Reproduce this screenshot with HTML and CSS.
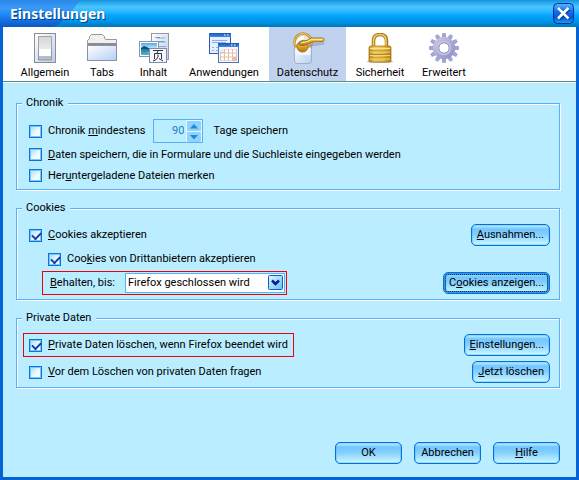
FILE: index.html
```html
<!DOCTYPE html>
<html lang="de">
<head>
<meta charset="utf-8">
<title>Einstellungen</title>
<link rel="stylesheet" href="styles.css">
</head>
<body>
<div class="window">
  <header class="titlebar">
    <svg class="titlebar-accent" viewBox="0 0 80 27" preserveAspectRatio="none" aria-hidden="true">
      <defs>
        <linearGradient id="accent" x1="0" y1="0" x2="0" y2="1">
          <stop offset="0" stop-color="#2a86e8"/><stop offset=".3" stop-color="#3a9cf6"/>
          <stop offset=".55" stop-color="#1d86fb"/><stop offset="1" stop-color="#0a58c4"/>
        </linearGradient>
      </defs>
      <path d="M0 0H80Q73 10 68 16Q60 25 52 27H0Z" fill="url(#accent)"/>
    </svg>
    <h1>Einstellungen</h1>
    <button class="close" type="button" aria-label="Schließen">
      <svg viewBox="0 0 21 21" width="21" height="21">
        <defs>
          <linearGradient id="closeFill" x1="0" y1="0" x2="0" y2="1">
            <stop offset="0" stop-color="#55bcff"/><stop offset=".35" stop-color="#1974ee"/>
            <stop offset=".7" stop-color="#0754d4"/><stop offset="1" stop-color="#12a5fa"/>
          </linearGradient>
        </defs>
        <rect x=".5" y=".5" width="20" height="20" rx="4" fill="url(#closeFill)" stroke="#0430a0"/>
        <path d="M6 6L16 16M16 6L6 16" stroke="#053a9c" stroke-width="3.400"/>
        <path d="M5 5L15.500 15.500M15.500 5L5 15.500" stroke="#fff" stroke-width="2.600"/>
      </svg>
    </button>
  </header>

  <nav class="toolbar">
    <button class="tool" type="button">
      <svg viewBox="0 0 30 30" width="30" height="30">
        <defs><linearGradient id="plate" x1="0" y1="0" x2="1" y2="1"><stop offset="0" stop-color="#fff"/><stop offset="1" stop-color="#b9cdf2"/></linearGradient>
        <linearGradient id="rocker" x1="0" y1="0" x2="0" y2="1"><stop offset="0" stop-color="#d5d5d5"/><stop offset="1" stop-color="#f1f1f1"/></linearGradient></defs>
        <rect x="4.500" y=".5" width="21" height="29" fill="url(#plate)" stroke="#8d8d8d"/>
        <rect x="8" y="3" width="14" height="24" fill="#b5bccb"/>
        <rect x="8.500" y="3.500" width="13" height="17" fill="url(#rocker)" stroke="#a3a3a3"/>
        <rect x="9" y="16" width="12" height="7" fill="#fff"/>
        <path d="M8.500 16V27H21.500V16" fill="none" stroke="#8f96a3"/>
      </svg>
      <span>Allgemein</span>
    </button>
    <button class="tool" type="button">
      <svg viewBox="0 0 30 30" width="30" height="30">
        <defs><linearGradient id="tabBody" x1="0" y1="0" x2="1" y2="1"><stop offset="0" stop-color="#fff"/><stop offset="1" stop-color="#b3cef6"/></linearGradient></defs>
        <path d="M.5 27.500V7.500L2.500 5.500V3.500L4.500 1.500H15.500L17.500 3.500V5.500L19 6.500H29.500V27.500Z" fill="#f0f0f0" stroke="#999"/>
        <path d="M1 11H29" stroke="#8d8d8d" stroke-width="2"/>
        <rect x=".5" y="12.500" width="29" height="15" fill="url(#tabBody)" stroke="#8a93a5"/>
      </svg>
      <span>Tabs</span>
    </button>
    <button class="tool" type="button">
      <svg viewBox="0 0 30 30" width="30" height="30">
        <defs><linearGradient id="sea" x1="0" y1="0" x2="0" y2="1"><stop offset="0" stop-color="#55a8ef"/><stop offset=".5" stop-color="#d4f0fa"/><stop offset=".52" stop-color="#187bac"/><stop offset="1" stop-color="#54b9cd"/></linearGradient></defs>
        <rect x="12.500" y=".5" width="17" height="26" fill="url(#plate)" stroke="#999"/>
        <path d="M16 4.500H21M16 8.500H25M16 13.500H27" stroke="#8ca1c4"/><path d="M18 5H26M19 9H27" stroke="#4d8ca9" opacity=".6"/>
        <rect x=".5" y="8.500" width="19" height="15" fill="#fff" stroke="#8994a5"/>
        <rect x="2" y="10" width="16" height="12" fill="url(#sea)"/>
        <path d="M2 15L5 13L8 14L11 16H2Z" fill="#164d7c"/><path d="M8 20L17 17V21Z" fill="#a7e6e4"/>
        <rect x="10.500" y="15.500" width="17" height="14" fill="#f4f7ff" stroke="#7f8ba3"/>
        <path d="M14 17.500H24M19 18L18 20M15.500 20.500H22.500V26M15.500 20.500V26M19 21.500V24Q18 27 14 28M20 25.500L24 28" fill="none" stroke="#333"/>
      </svg>
      <span>Inhalt</span>
    </button>
    <button class="tool" type="button">
      <svg viewBox="0 0 30 30" width="30" height="30">
        <defs><linearGradient id="caption" x1="0" y1="0" x2="0" y2="1"><stop offset="0" stop-color="#1855b5"/><stop offset="1" stop-color="#3f8be4"/></linearGradient></defs>
        <rect x=".5" y=".5" width="21" height="20" fill="#e6efff" stroke="#2b5dad"/>
        <rect x="0" y="0" width="22" height="4" fill="url(#caption)"/>
        <path d="M15 2H16.500M18 2H19.500" stroke="#fff"/>
        <path d="M3 7.500H18M3 9.500H17M3 14.500H5M7 14.500H10M3 17.500H5M7 17.500H10" stroke="#8daee0"/>
        <rect x="9.500" y="10.500" width="20" height="19" fill="#f3f6ff" stroke="#4a77b9"/>
        <rect x="9" y="10" width="21" height="4" fill="url(#caption)"/>
        <path d="M22 12H23.500M25 12H26.500" stroke="#fff"/>
        <rect x="11" y="16" width="17" height="12" fill="#e7bda9"/>
        <path d="M11 16H15V19H11Z" fill="#e8edfa"/>
        <g fill="#fff"><path d="M16 16.500h3v3h-3zM20 16.500h3v3h-3zM24 16.500h3v3h-3zM12 20.500h3v3h-3zM16 20.500h3v3h-3zM20 20.500h3v3h-3zM24 20.500h3v3h-3zM12 24.500h3v3h-3zM16 24.500h3v3h-3zM20 24.500h3v3h-3z"/></g>
      </svg>
      <span>Anwendungen</span>
    </button>
    <button class="tool tool-active" type="button" aria-current="page">
      <svg viewBox="0 0 30 30" width="30" height="30" overflow="visible">
        <defs><linearGradient id="gold" x1="0" y1="0" x2="0" y2="1"><stop offset="0" stop-color="#f9df80"/><stop offset=".5" stop-color="#dca92f"/><stop offset="1" stop-color="#a97310"/></linearGradient>
        <linearGradient id="tag" x1="0" y1="0" x2="1" y2="1"><stop offset="0" stop-color="#fff"/><stop offset="1" stop-color="#b7cff5"/></linearGradient></defs>
        <path d="M1.500 12Q1 18 1.500 28Q2 30.500 4 30.500H16Q18.500 30.500 18.500 28V13Z" fill="url(#tag)" stroke="#a4afc4"/>
        <circle cx="10" cy="9" r="8.500" fill="#e4e4e2" stroke="#b88a22" stroke-width="2.600"/>
        <circle cx="10" cy="9" r="8.500" fill="none" stroke="#f2d166"/>
        <path d="M2.500 14Q8 19 17.500 14V22H2.500Z" fill="#f0f5ff"/>
        <path d="M4 11Q5 5 11 4.500" fill="none" stroke="#fff" stroke-width="3"/>
        <path d="M16 11L31 9V11.500L15 14Z" fill="#8994b4" opacity=".55"/>
        <circle cx="9.500" cy="13.500" r="5.500" fill="url(#gold)" stroke="#a5731a"/>
        <path d="M5.500 10Q8 7 14 7.500L18 5L29.500 5Q31 5 31 6.500V7.500Q31 8.500 29 8.500L19 9Q15 12 10 12.500Q5 12.500 5.500 10Z" fill="url(#gold)" stroke="#a4711a"/>
        <path d="M8 10L14 8.500L18.500 6.500H29" fill="none" stroke="#ffeb9c"/>
      </svg>
      <span>Datenschutz</span>
    </button>
    <button class="tool" type="button">
      <svg viewBox="0 0 30 30" width="30" height="30">
        <defs><linearGradient id="lock" x1="0" y1="0" x2="1" y2="0"><stop offset="0" stop-color="#b68118"/><stop offset=".25" stop-color="#efc957"/><stop offset=".65" stop-color="#e6b73d"/><stop offset="1" stop-color="#ae7711"/></linearGradient></defs>
        <ellipse cx="15" cy="28.500" rx="13" ry="1.500" fill="#aaa"/>
        <path d="M8.500 14V8Q8.500 1.500 15 1.500Q21.500 1.500 21.500 8V14" fill="none" stroke="#a87518" stroke-width="3.500"/>
        <path d="M8.500 14V8Q8.500 1.500 15 1.500Q21 1.500 21 8V14" fill="none" stroke="#f0d06e" stroke-width="1.500"/>
        <rect x="4" y="13" width="22" height="16" rx="1.500" fill="url(#lock)" stroke="#ad781b" stroke-width=".8"/>
        <path d="M5 15.500H25" stroke="#f9e391" stroke-width="1.500"/>
        <path d="M5 18H25M5 21.500H25M5 25H25" stroke="#b78623"/><path d="M5 19H25M5 22.500H25M5 26H25" stroke="#f4d675"/>
      </svg>
      <span>Sicherheit</span>
    </button>
    <button class="tool" type="button">
      <svg viewBox="-15 -15 30 30" width="30" height="30">
        <defs><linearGradient id="gearFill" x1="0" y1="0" x2="1" y2="1"><stop offset="0" stop-color="#c6c6e6"/><stop offset="1" stop-color="#9292c8"/></linearGradient>
        <path id="tooth" d="M-2.400 -10L-1.700 -15H1.700L2.400 -10Z"/></defs>
        <g fill="#a4a4d3">
          <use href="#tooth"/><use href="#tooth" transform="rotate(30)"/><use href="#tooth" transform="rotate(60)"/><use href="#tooth" transform="rotate(90)"/><use href="#tooth" transform="rotate(120)"/><use href="#tooth" transform="rotate(150)"/><use href="#tooth" transform="rotate(180)"/><use href="#tooth" transform="rotate(210)"/><use href="#tooth" transform="rotate(240)"/><use href="#tooth" transform="rotate(270)"/><use href="#tooth" transform="rotate(300)"/><use href="#tooth" transform="rotate(330)"/>
        </g>
        <circle r="8.200" fill="none" stroke="url(#gearFill)" stroke-width="5.500"/>
        <circle r="6.500" fill="none" stroke="#c4c4e4" stroke-width="1.500"/>
        <circle r="5.200" fill="#fff" stroke="#8d8dbd"/>
      </svg>
      <span>Erweitert</span>
    </button>
  </nav>

  <main class="pane">
    <fieldset>
      <legend>Chronik</legend>
      <div class="row row-tall">
        <input type="checkbox" id="history"><label for="history">Chronik <u>m</u>indestens</label>
        <span class="spinner">
          <input type="text" id="days" value="90" aria-label="Tage" disabled>
          <span class="steps">
            <button type="button" aria-label="Mehr" disabled><svg viewBox="0 0 14 10" width="14" height="10"><path d="M3 7.500H11L7 3Z"/></svg></button>
            <button type="button" aria-label="Weniger" disabled><svg viewBox="0 0 14 10" width="14" height="10"><path d="M3 3H11L7 7.500Z"/></svg></button>
          </span>
        </span>
        <label for="days">Tage speichern</label>
      </div>
      <div class="row row-short">
        <input type="checkbox" id="forms"><label for="forms"><u>D</u>aten speichern, die in Formulare und die Suchleiste eingegeben werden</label>
      </div>
      <div class="row row-short">
        <input type="checkbox" id="downloads"><label for="downloads">Her<u>u</u>ntergeladene Dateien merken</label>
      </div>
    </fieldset>

    <fieldset class="cookies">
      <legend>Cookies</legend>
      <div class="row">
        <input type="checkbox" id="cookies" checked><label for="cookies"><u>C</u>ookies akzeptieren</label>
        <button class="button push" type="button"><u>A</u>usnahmen...</button>
      </div>
      <div class="row nested">
        <input type="checkbox" id="third" checked><label for="third">Coo<u>k</u>ies von Drittanbietern akzeptieren</label>
      </div>
      <div class="row nested">
        <div class="marked keep">
          <label for="keep"><u>B</u>ehalten, bis:</label>
          <span class="dropdown">
            <select id="keep"><option>Firefox geschlossen wird</option></select>
            <svg viewBox="0 0 15 15" width="15" height="15" aria-hidden="true">
              <defs><linearGradient id="arrowFill" x1="0" y1="0" x2="1" y2="1"><stop offset="0" stop-color="#e6f8ff"/><stop offset="1" stop-color="#66bdf6"/></linearGradient></defs>
              <rect x=".5" y=".5" width="14" height="14" rx="1" fill="url(#arrowFill)" stroke="#0862cb"/>
              <path d="M4 5.500L7.500 9L11 5.500" fill="none" stroke="#001b94" stroke-width="2.500"/>
            </svg>
          </span>
        </div>
        <button class="button push default" type="button">C<u>o</u>okies anzeigen...</button>
      </div>
    </fieldset>

    <fieldset class="private">
      <legend>Private Daten</legend>
      <div class="row">
        <div class="marked clear">
          <input type="checkbox" id="clear" checked><label for="clear"><u>P</u>rivate Daten löschen, wenn Firefox beendet wird</label>
        </div>
        <button class="button push" type="button"><u>E</u>instellungen...</button>
      </div>
      <div class="row">
        <input type="checkbox" id="ask"><label for="ask"><u>V</u>or dem Löschen von privaten Daten fragen</label>
        <button class="button push" type="button"><u>J</u>etzt löschen</button>
      </div>
    </fieldset>

    <footer class="actions">
      <button class="button" type="button">OK</button>
      <button class="button" type="button">Abbrechen</button>
      <button class="button" type="button"><u>H</u>ilfe</button>
    </footer>
  </main>
</div>
</body>
</html>
```
FILE: styles.css
```css
:root {
  --sky: #b9edff;
  --line: #59b0fa;
  --edge: #0070dc;
  --disabled: #2080c0;
}

* {
  box-sizing: border-box;
}

body {
  margin: 0;
  color: #000;
  font: 11px/14px Roboto, "Noto Sans", sans-serif;
}

button,
input,
select {
  margin: 0;
  padding: 0;
  color: inherit;
  font: inherit;
}

svg {
  display: block;
}

.window {
  display: flex;
  flex-direction: column;
  min-height: 100vh;
  border: solid #0563d8;
  border-width: 0 3px 3px;
  background: var(--sky);
}

/* Title bar */
.titlebar {
  position: relative;
  display: flex;
  align-items: center;
  justify-content: space-between;
  height: 27px;
  margin: 0 -3px;
  padding: 0 5px 0 10px;
  background: linear-gradient(#1593e0, #4ac5ff 25%, #31baff 40%, #00a6ff 58%, #0094e8 78%, #0078bd);
}

.titlebar-accent {
  position: absolute;
  top: 0;
  left: 0;
  width: 80px;
  height: 27px;
}

h1 {
  position: relative;
  margin: 0;
  color: #fff;
  font: bold 14px/28px "Noto Sans", sans-serif;
  text-shadow: 1px 1px 0 #073a80;
}

.close {
  border: 0;
  background: none;
}

/* Category toolbar */
.toolbar {
  display: grid;
  grid-template-columns: 62px 52px 51px 90px 77px 68px 60px;
  height: 55px;
  padding-left: 11px;
  border-bottom: 1px solid #5a8c8c;
  background: #fff;
}

.tool {
  display: flex;
  flex-direction: column;
  align-items: center;
  gap: 3px;
  padding-top: 6px;
  border: 0;
  background: none;
  white-space: nowrap;
}

.tool-active {
  background: #c1d2ee;
}

/* Settings pane */
.pane {
  display: flex;
  flex: 1;
  flex-direction: column;
  gap: 11px;
  padding: 13px 16px 13px 13px;
  border-top: 1px solid #fff;
}

fieldset {
  min-width: 0;
  margin: 0;
  padding: 0 9px 3px 6px;
  border: 1px solid var(--line);
  box-shadow: 1px 1px 0 #fff, inset 1px 1px 0 #fff;
}

.cookies {
  padding-bottom: 4px;
}

legend {
  margin: 0 0 8px -1px;
  padding: 0 5px 0 4px;
  background: var(--sky);
}

.row {
  display: flex;
  align-items: center;
  gap: 6px;
  height: 24px;
  padding-left: 6px;
  white-space: nowrap;
}

.row-tall {
  height: 26px;
}

.row-short {
  height: 21px;
}

.nested {
  padding-left: 25px;
}

.private .row + .row {
  margin-top: 3px;
}

.push {
  margin-left: auto;
}

.marked {
  display: flex;
  align-items: center;
  gap: 6px;
  height: 24px;
  border: 1px solid #f00000;
}

.clear {
  margin-left: -6px;
  padding: 0 5px;
}

.keep {
  justify-content: space-between;
  width: 245px;
  margin-left: -6px;
  padding: 0 1px 0 7px;
}

input[type="checkbox"] {
  flex: none;
  width: 13px;
  height: 13px;
  border: 1px solid #0874dc;
  outline: 0;
  appearance: none;
  background: linear-gradient(135deg, #9cdcfb, #f0fcff 60%, #fff);
  box-shadow: inset 0 0 0 1px #7fc5f8;
}

input[type="checkbox"]:checked::before {
  display: block;
  width: 7px;
  height: 4px;
  margin: 2px;
  border: solid #153bb0;
  border-width: 0 0 2px 2px;
  content: "";
  transform: rotate(-45deg);
}

/* Number box */
.spinner {
  display: flex;
  width: 50px;
  height: 24px;
  margin: 0 4px 0 2px;
  border: 1px solid var(--line);
  color: var(--disabled);
}

.spinner input {
  flex: 1;
  min-width: 0;
  padding-right: 2px;
  border: 0;
  background: none;
  text-align: right;
}

.steps {
  display: flex;
  flex-direction: column;
  gap: 1px;
  padding: 1px;
  background: #e2f8ff;
}

.steps button {
  height: 10px;
  border: 0;
  border-radius: 1px;
  background: #90d2fa;
}

.steps path {
  fill: #168be0;
}

/* Drop-down */
.dropdown {
  position: relative;
  width: 160px;
}

.dropdown select {
  display: block;
  width: 100%;
  height: 20px;
  padding-left: 2px;
  border: 1px solid var(--line);
  border-radius: 0;
  appearance: none;
  background: #fff;
}

.dropdown svg {
  position: absolute;
  top: 2px;
  right: 2px;
  pointer-events: none;
}

/* Push buttons */
.button {
  height: 22px;
  padding: 0 5px;
  border: 1px solid var(--edge);
  border-radius: 5px;
  background: linear-gradient(#c8f2ff, #73c6ff 20%, #82cdff 45%, #a8e5ff 75%, #d0f8ff);
  box-shadow: inset 0 0 0 1px #58b4f866;
}

.default {
  outline: 1px dotted #034;
  outline-offset: -3px;
  box-shadow: inset 0 0 0 2px #3b91ee;
}

.actions {
  display: flex;
  justify-content: flex-end;
  gap: 12px;
  margin-top: auto;
}

.actions .button {
  min-width: 67px;
}
```
